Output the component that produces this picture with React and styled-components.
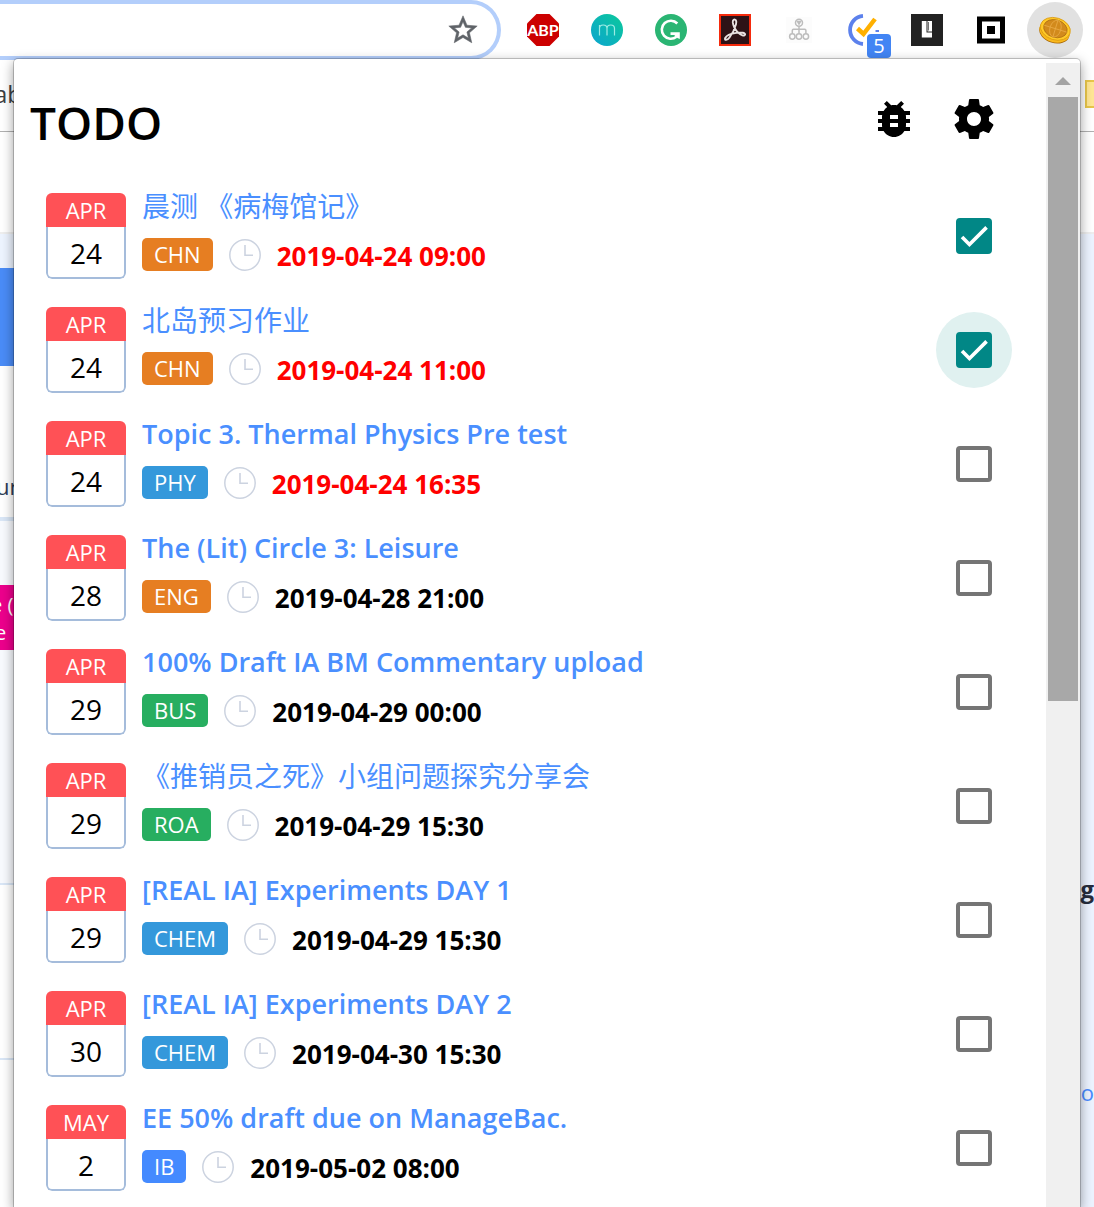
import React, { useState } from "react";
import styled, { createGlobalStyle } from "styled-components";

const GlobalStyle = createGlobalStyle`
  * { box-sizing: border-box; }
  body {
    margin: 0;
    background: #fff;
    font-family: "Open Sans", "Noto Sans", "Noto Sans CJK SC", sans-serif;
    color: #000;
  }
  button { font: inherit; padding: 0; border: 0; background: none; cursor: pointer; }
`;

const Screen = styled.div`
  position: relative;
  height: 100vh;
  overflow: hidden;
  display: flex;
  flex-direction: column;
`;

/* Browser toolbar */
const Toolbar = styled.header`
  display: flex;
  align-items: center;
  gap: 14px;
  padding-right: 11px;
  flex: none;
  height: 60px;
`;

const Omnibox = styled.div`
  flex: 1;
  height: 60px;
  display: flex;
  align-items: center;
  padding-right: 17px;
  border: 4px solid #b3cefb;
  border-left: 0;
  border-radius: 0 30px 30px 0;
`;

const Address = styled.input`
  flex: 1;
  min-width: 0;
  height: 40px;
  border: 0;
  outline: 0;
  background: none;
  font: inherit;
`;

const StarButton = styled.button`
  display: flex;
`;

const Extensions = styled.nav`
  display: flex;
  gap: 8px;
`;

const Extension = styled.button`
  position: relative;
  display: grid;
  place-items: center;
  width: 56px;
  height: 56px;
  border-radius: 50%;
  background: ${(p) => (p.$active ? "#e1e1e1" : "transparent")};
`;

const Badge = styled.span`
  position: absolute;
  right: 0;
  bottom: 0;
  width: 24px;
  height: 24px;
  border-radius: 4px;
  background: #4285f4;
  color: #fff;
  font-size: 20px;
  line-height: 24px;
`;

/* Page behind the popup */
const BookmarksBar = styled.div`
  display: flex;
  align-items: center;
  justify-content: space-between;
  flex: none;
  height: 72px;
  padding-bottom: 4px;
  border-bottom: 1px solid #b0b0b0;
  font-size: 24px;
  color: #3c4043;
`;

const BookmarkText = styled.span`
  text-indent: -6px;
`;

const Folder = styled.span`
  width: 9px;
  height: 28px;
  border: 2px solid #e8c64a;
  border-right: 0;
  background: #ffe694;
`;

const SiteHeader = styled.div`
  flex: none;
  height: 102px;
  border-bottom: 2px solid #eee;
`;

const Site = styled.div`
  flex: 1;
  display: flex;
  justify-content: space-between;
`;

const SideColumn = styled.div`
  width: 40px;
  overflow: hidden;
`;

const Block = styled.div`
  display: flow-root;
  height: ${(p) => p.$h}px;
  background: ${(p) => p.$bg || "#fff"};
  border-bottom: ${(p) => p.$line || 0}px solid #d9e6f6;
`;

const PageText = styled.div`
  padding-top: 104px;
  text-indent: -4px;
  font-size: 22px;
  line-height: 32px;
  color: #2d3b55;
`;

const EventChip = styled.div`
  margin: 64px 0 0 -5px;
  padding: 6px 0 3px;
  background: #ec008c;
  color: #fff;
  font-size: 20px;
  line-height: 28px;
  text-indent: -4px;
`;

const RightColumn = styled.div`
  width: 40px;
  background: #ecf3ff;
  display: flex;
  flex-direction: column;
  align-items: flex-end;
  gap: 171px;
  padding-top: 639px;
  line-height: 32px;
`;

const BoldText = styled.b`
  font-size: 24px;
  color: #262d3d;
`;

const LinkText = styled.a`
  font-size: 22px;
  color: #4a8cff;
`;

/* Popup */
const Popup = styled.section`
  position: absolute;
  top: 58px;
  bottom: 0;
  left: 13px;
  right: 13px;
  display: flex;
  overflow: hidden;
  border: 1px solid rgba(0, 0, 0, 0.2);
  border-bottom: 0;
  border-radius: 5px 5px 0 0;
  background: #fff;
  background-clip: padding-box;
  box-shadow: 0 4px 12px rgba(0, 0, 0, 0.36);
`;

const Content = styled.main`
  flex: 1;
  min-width: 0;
`;

const Scrollbar = styled.div`
  display: flex;
  flex-direction: column;
  align-items: center;
  width: 34px;
  margin-top: 4px;
  background: #f0f0f0;
`;

const ScrollArrow = styled.svg`
  width: 16px;
  height: 34px;
`;

const Thumb = styled.div`
  width: 30px;
  height: 604px;
  background: #a8a8a8;
`;

const TopRow = styled.div`
  display: flex;
  align-items: center;
  height: 120px;
  padding: 0 32px 0 16px;
`;

const Title = styled.h1`
  flex: 1;
  margin: 0;
  padding-top: 6px;
  font-size: 46px;
  font-weight: 600;
  line-height: 60px;
`;

const IconButton = styled.button`
  display: grid;
  place-items: center;
  width: 80px;
  height: 80px;
`;

const List = styled.ul`
  display: flex;
  flex-direction: column;
  gap: 28px;
  margin: 0;
  padding: 14px 34px 28px 32px;
  list-style: none;
`;

const Row = styled.li`
  display: flex;
  align-items: center;
  gap: 16px;
`;

const DateCard = styled.div`
  flex: none;
  width: 80px;
  border-radius: 6px;
  overflow: hidden;
  text-align: center;
`;

const Month = styled.div`
  background: #ff5156;
  color: #fff;
  font-size: 22px;
  line-height: 34px;
`;

const Day = styled.div`
  padding-top: 2px;
  border: 2px solid #a5bcdb;
  border-top: 0;
  border-radius: 0 0 6px 6px;
  font-size: 28px;
  line-height: 48px;
`;

const Body = styled.div`
  flex: 1;
  min-width: 0;
  align-self: flex-start;
`;

const TaskLink = styled.a`
  display: block;
  margin-bottom: 19px;
  color: #4a8fff;
  font-size: ${(p) => (p.$cjk ? 28 : 27)}px;
  font-weight: ${(p) => (p.$cjk ? 400 : 600)};
  line-height: 26px;
  text-decoration: none;
  white-space: nowrap;
`;

const Meta = styled.div`
  display: flex;
  align-items: center;
  gap: 16px;
`;

const tagColors = {
  CHN: "#e67e22",
  ENG: "#e67e22",
  PHY: "#3498db",
  CHEM: "#3498db",
  BUS: "#27ae60",
  ROA: "#27ae60",
  IB: "#448aff",
};

const Tag = styled.span`
  padding: 0 12px;
  border-radius: 5px;
  background: ${(p) => tagColors[p.$name]};
  color: #fff;
  font-size: 22px;
  line-height: 33px;
`;

const Due = styled.time`
  padding-top: 3px;
  color: ${(p) => (p.$urgent ? "#f00" : "#000")};
  font-size: 26px;
  font-weight: 700;
  line-height: 30px;
`;

const CheckLabel = styled.label`
  flex: none;
  display: grid;
  place-items: center;
  width: 76px;
  height: 76px;
  border-radius: 50%;
  background: ${(p) => (p.$focus ? "#e0f1f0" : "transparent")};
  cursor: pointer;
`;

const CheckInput = styled.input`
  grid-area: 1 / 1;
  appearance: none;
  width: 36px;
  height: 36px;
  margin: 0;
  border: 4px solid #757575;
  border-radius: 4px;
  &:checked {
    border-color: #018786;
    background: #018786;
  }
`;

const CheckMark = styled.svg`
  grid-area: 1 / 1;
  width: 28px;
  height: 28px;
  pointer-events: none;
  z-index: 1;
`;

const BUG =
  "M20 8h-2.81c-.45-.78-1.07-1.45-1.82-1.96L17 4.41 15.59 3l-2.17 2.17C12.96 5.06 12.49 5 12 5c-.49 0-.96.06-1.41.17L8.41 3 7 4.41l1.62 1.63C7.88 6.55 7.26 7.22 6.81 8H4v2h2.09c-.05.33-.09.66-.09 1v1H4v2h2v1c0 .34.04.67.09 1H4v2h2.81c1.04 1.79 2.97 3 5.19 3s4.15-1.21 5.19-3H20v-2h-2.09c.05-.33.09-.66.09-1v-1h2v-2h-2v-1c0-.34-.04-.67-.09-1H20V8zm-6 8h-4v-2h4v2zm0-4h-4v-2h4v2z";
const GEAR =
  "M19.43 12.98c.04-.32.07-.64.07-.98s-.03-.66-.07-.98l2.11-1.65c.19-.15.24-.42.12-.64l-2-3.46c-.12-.22-.39-.3-.61-.22l-2.49 1c-.52-.4-1.08-.73-1.69-.98l-.38-2.65C14.46 2.18 14.25 2 14 2h-4c-.25 0-.46.18-.49.42l-.38 2.65c-.61.25-1.17.59-1.69.98l-2.49-1c-.23-.09-.49 0-.61.22l-2 3.46c-.13.22-.07.49.12.64l2.11 1.65c-.04.32-.07.65-.07.98s.03.66.07.98l-2.11 1.65c-.19.15-.24.42-.12.64l2 3.46c.12.22.39.3.61.22l2.49-1c.52.4 1.08.73 1.69.98l.38 2.65c.03.24.24.42.49.42h4c.25 0 .46-.18.49-.42l.38-2.65c.61-.25 1.17-.59 1.69-.98l2.49 1c.23.09.49 0 .61-.22l2-3.46c.12-.22.07-.49-.12-.64l-2.11-1.65zM12 15.5c-1.93 0-3.5-1.57-3.5-3.5s1.57-3.5 3.5-3.5 3.5 1.57 3.5 3.5-1.57 3.5-3.5 3.5z";
const STAR =
  "M22 9.24l-7.19-.62L12 2 9.19 8.63 2 9.24l5.46 4.73L5.82 21 12 17.27 18.18 21l-1.63-7.03L22 9.24zM12 15.4l-3.76 2.27 1-4.28-3.32-2.88 4.38-.38L12 6.1l1.71 4.04 4.38.38-3.32 2.88 1 4.28L12 15.4z";

const MaterialIcon = ({ d, size = 48, color = "#000", stroke = 0 }) => (
  <svg width={size} height={size} viewBox="0 0 24 24" fill={color} stroke={color} strokeWidth={stroke} aria-hidden="true">
    <path d={d} />
  </svg>
);

const Glyph = ({ children }) => (
  <svg width="32" height="32" viewBox="0 0 32 32" fill="none" aria-hidden="true">
    {children}
  </svg>
);

const AdblockIcon = () => (
  <Glyph>
    <path d="M9.5 0h13L32 9.5v13L22.5 32h-13L0 22.5v-13z" fill="#cc0000" />
    <text x="16" y="22" textAnchor="middle" fontSize="16" fontWeight="700" fill="#fff" fontFamily="Lato, sans-serif">ABP</text>
  </Glyph>
);

const MercuryIcon = () => (
  <Glyph>
    <defs>
      <linearGradient id="teal" x1="1" y1="0" x2="0" y2="1">
        <stop offset="0" stopColor="#0cc99a" />
        <stop offset="1" stopColor="#0ba4d0" />
      </linearGradient>
    </defs>
    <circle cx="16" cy="16" r="16" fill="url(#teal)" />
    <path d="M8.5 21.5V11M8.5 14.5c0-2.2 1.5-3.5 3.7-3.5s3.8 1.3 3.8 3.5v7M16 14.5c0-2.2 1.6-3.5 3.8-3.5s3.7 1.3 3.7 3.5v7" stroke="#9debe4" strokeWidth="1.2" />
  </Glyph>
);

const GrammarIcon = () => (
  <Glyph>
    <circle cx="16" cy="16" r="16" fill="#2ab573" />
    <path d="M22.3 9.5A9 9 0 1 0 21.5 22.7" stroke="#fff" strokeWidth="2.6" />
    <path d="M15.5 18.3h9.3v6.7l-2.4-.9-3.2-3.1h-3.7z" fill="#fff" />
  </Glyph>
);

const AcrobatIcon = () => (
  <Glyph>
    <rect x="1" y="1" width="30" height="30" fill="#2d1216" stroke="#f52a0c" strokeWidth="2" />
    <path d="M14.6 5.9c2-1.2 3.3.9 2.4 4.3-1 4-3.9 9.8-6.5 13.3-2.2 3-5.4 3-4.3.5 1.2-2.6 6.3-4.5 11.2-5.1 4.700-.6 9.200-.3 8.700 1.700-.5 2-4.400.6-7-2-2.900-2.900-5-7.400-5.300-10.200-.1-1.300.1-2.100.8-2.500z" stroke="#e9e1e1" strokeWidth="1.9" />
  </Glyph>
);

const TreeIcon = () => (
  <Glyph>
    <rect x="3" y="3" width="26" height="26" fill="#fcfcfc" />
    <g stroke="#bdbdbd" strokeWidth="1.5">
      <circle cx="16" cy="8.8" r="3.5" />
      <circle cx="9.3" cy="22.5" r="2.7" />
      <circle cx="16" cy="22.5" r="2.7" />
      <circle cx="22.9" cy="22.5" r="2.7" />
      <path d="M16 12.3v7.5M9.3 19.8v-3.3q0-1.2 1.2-1.2h11.2q1.2 0 1.2 1.2v3.3M14.5 7.5h3l-1.5 2.5z" />
    </g>
  </Glyph>
);

const TickIcon = () => (
  <Glyph>
    <path d="M16 1.9A14.1 14.1 0 0 0 16 30" stroke="#5c81ec" strokeWidth="3.8" />
    <path d="M10.5 14.5l6 5.5L28 5" stroke="#ffb000" strokeWidth="4.5" />
    <path d="M28.5 17h3.5" stroke="#5c81ec" strokeWidth="2" />
  </Glyph>
);

const LinerIcon = () => (
  <Glyph>
    <rect width="32" height="32" fill="#222" />
    <path d="M10.8 7h4.700v11.500h5.500v5H10.8z" fill="#fff" />
    <path d="M16.5 7H21v10.500h-4.500z" fill="#fff" />
    <path d="M17.500 8v8.500" stroke="#777" strokeWidth="1" />
  </Glyph>
);

const SquareIcon = () => (
  <Glyph>
    <rect x="4.5" y="5" width="23" height="22" stroke="#000" strokeWidth="5" />
    <rect x="12" y="12" width="8" height="8" fill="#000" />
  </Glyph>
);

const CoinIcon = () => (
  <Glyph>
    <g transform="rotate(17 16 16)">
      <ellipse cx="16" cy="18.2" rx="15.5" ry="11" fill="#a86808" />
      <ellipse cx="16" cy="17.2" rx="15.5" ry="11" fill="#f9b81c" />
      <ellipse cx="16" cy="14.8" rx="15.3" ry="11" fill="#ffc928" stroke="#d99a12" strokeWidth=".8" />
      <ellipse cx="16" cy="14.6" rx="12" ry="8.8" fill="#d28a1c" stroke="#a86a12" strokeWidth=".7" />
      <g stroke="#e8aa45" strokeWidth=".8">
        <ellipse cx="16" cy="14.6" rx="5.5" ry="8.6" />
        <path d="M16 6v17.2M4.2 14.6h23.6" />
      </g>
    </g>
  </Glyph>
);

const ClockIcon = () => (
  <svg width="32" height="32" viewBox="0 0 32 32" fill="none" aria-hidden="true">
    <circle cx="16" cy="16" r="15.2" stroke="#ccd3e0" strokeWidth="1.5" />
    <path d="M16 6v10.3h8" stroke="#ccd3e0" strokeWidth="1.6" />
  </svg>
);

const extensions = [
  { name: "Adblock Plus", Icon: AdblockIcon },
  { name: "Mercury", Icon: MercuryIcon },
  { name: "Grammarly", Icon: GrammarIcon },
  { name: "Acrobat", Icon: AcrobatIcon },
  { name: "Sitemap", Icon: TreeIcon },
  { name: "TickTick", Icon: TickIcon, badge: "5" },
  { name: "Liner", Icon: LinerIcon },
  { name: "Square", Icon: SquareIcon },
  { name: "Todo", Icon: CoinIcon, active: true },
];

const initialTasks = [
  { title: "晨测 《病梅馆记》", cjk: true, month: "APR", day: 24, tag: "CHN", due: "2019-04-24 09:00", urgent: true, done: true },
  { title: "北岛预习作业", cjk: true, month: "APR", day: 24, tag: "CHN", due: "2019-04-24 11:00", urgent: true, done: true },
  { title: "Topic 3. Thermal Physics Pre test", month: "APR", day: 24, tag: "PHY", due: "2019-04-24 16:35", urgent: true },
  { title: "The (Lit) Circle 3: Leisure", month: "APR", day: 28, tag: "ENG", due: "2019-04-28 21:00" },
  { title: "100% Draft IA BM Commentary upload", month: "APR", day: 29, tag: "BUS", due: "2019-04-29 00:00" },
  { title: "《推销员之死》小组问题探究分享会", cjk: true, month: "APR", day: 29, tag: "ROA", due: "2019-04-29 15:30" },
  { title: "[REAL IA] Experiments DAY 1", month: "APR", day: 29, tag: "CHEM", due: "2019-04-29 15:30" },
  { title: "[REAL IA] Experiments DAY 2", month: "APR", day: 30, tag: "CHEM", due: "2019-04-30 15:30" },
  { title: "EE 50% draft due on ManageBac.", month: "MAY", day: 2, tag: "IB", due: "2019-05-02 08:00" },
];

function Task({ task, focused, onToggle }) {
  return (
    <Row>
      <DateCard>
        <Month>{task.month}</Month>
        <Day>{task.day}</Day>
      </DateCard>
      <Body>
        <TaskLink href="#" $cjk={task.cjk}>{task.title}</TaskLink>
        <Meta>
          <Tag $name={task.tag}>{task.tag}</Tag>
          <ClockIcon />
          <Due $urgent={task.urgent}>{task.due}</Due>
        </Meta>
      </Body>
      <CheckLabel $focus={focused}>
        <CheckInput type="checkbox" aria-label={task.title} checked={!!task.done} onChange={onToggle} />
        {task.done && (
          <CheckMark viewBox="0 0 24 24" fill="none" aria-hidden="true">
            <path d="M1.73 12.91L8.1 19.28 22.79 4.59" stroke="#fff" strokeWidth="3.12" />
          </CheckMark>
        )}
      </CheckLabel>
    </Row>
  );
}

export default function App() {
  const [tasks, setTasks] = useState(initialTasks);
  const [focused, setFocused] = useState(1);

  const toggle = (index) => {
    setFocused(index);
    setTasks(tasks.map((t, i) => (i === index ? { ...t, done: !t.done } : t)));
  };

  return (
    <>
      <GlobalStyle />
      <Screen>
        <Toolbar>
          <Omnibox>
            <Address type="text" aria-label="Address" />
            <StarButton aria-label="Bookmark this page">
              <MaterialIcon d={STAR} size={34} color="#5f6368" stroke={0.4} />
            </StarButton>
          </Omnibox>
          <Extensions>
            {extensions.map(({ name, Icon, badge, active }) => (
              <Extension key={name} aria-label={name} $active={active}>
                <Icon />
                {badge && <Badge>{badge}</Badge>}
              </Extension>
            ))}
          </Extensions>
        </Toolbar>
        <BookmarksBar>
          <BookmarkText>ab</BookmarkText>
          <Folder />
        </BookmarksBar>
        <SiteHeader />
        <Site>
          <SideColumn>
            <Block $h={34} $bg="#edf4ff" />
            <Block $h={98} $bg="#4a8cf7" />
            <Block $h={155} $line={4}>
              <PageText>ur</PageText>
            </Block>
            <Block $h={364} $bg="#f8fafe" $line={2}>
              <EventChip>
                e (<br />e
              </EventChip>
            </Block>
            <Block $h={175} $line={2} />
          </SideColumn>
          <RightColumn>
            <BoldText>g</BoldText>
            <LinkText>o</LinkText>
          </RightColumn>
        </Site>
        <Popup>
          <Content>
            <TopRow>
              <Title>TODO</Title>
              <IconButton aria-label="Report a bug">
                <MaterialIcon d={BUG} />
              </IconButton>
              <IconButton aria-label="Settings">
                <MaterialIcon d={GEAR} />
              </IconButton>
            </TopRow>
            <List>
              {tasks.map((task, i) => (
                <Task key={task.title} task={task} focused={focused === i} onToggle={() => toggle(i)} />
              ))}
            </List>
          </Content>
          <Scrollbar>
            <ScrollArrow viewBox="0 0 16 34" aria-hidden="true">
              <path d="M8 14l8 8H0z" fill="#a3a3a3" />
            </ScrollArrow>
            <Thumb />
          </Scrollbar>
        </Popup>
      </Screen>
    </>
  );
}
